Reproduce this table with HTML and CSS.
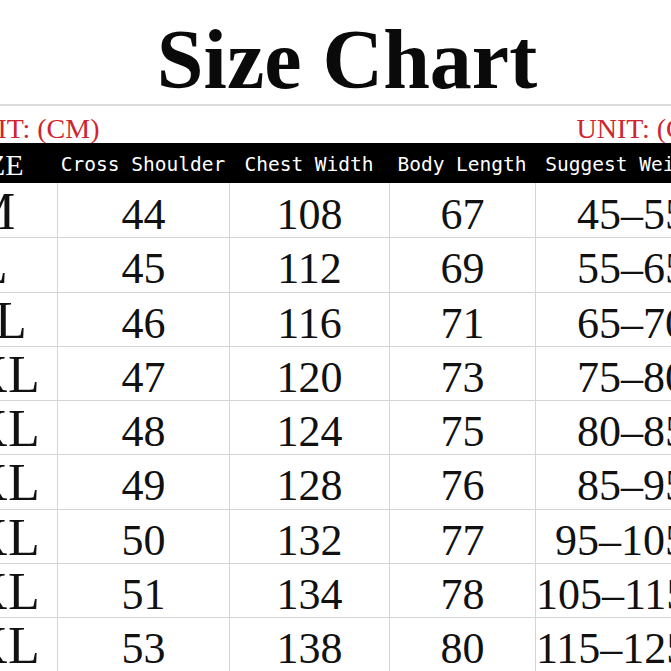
FILE: index.html
```html
<!DOCTYPE html>
<html lang="en">
<head>
<meta charset="utf-8">
<title>Size Chart</title>
<link rel="stylesheet" href="styles.css">
</head>
<body>
<div class="sheet">
  <h1 class="title">Size Chart</h1>
  <div class="unit-row">
    <span class="unit">UNIT: (CM)</span>
    <span class="unit">UNIT: (CM)</span>
  </div>
  <div class="chart">
    <div class="hd hd-size">SIZE</div>
    <div class="hd">Cross Shoulder</div>
    <div class="hd">Chest Width</div>
    <div class="hd">Body Length</div>
    <div class="hd">Suggest Weight(KG)</div>

    <div class="c size">M</div><div class="c">44</div><div class="c">108</div><div class="c">67</div><div class="c wt">45–55</div>
    <div class="c size r">L</div><div class="c r">45</div><div class="c r">112</div><div class="c r">69</div><div class="c wt r">55–65</div>
    <div class="c size r">XL</div><div class="c r">46</div><div class="c r">116</div><div class="c r">71</div><div class="c wt r">65–70</div>
    <div class="c size r">2XL</div><div class="c r">47</div><div class="c r">120</div><div class="c r">73</div><div class="c wt r">75–80</div>
    <div class="c size r">3XL</div><div class="c r">48</div><div class="c r">124</div><div class="c r">75</div><div class="c wt r">80–85</div>
    <div class="c size r">4XL</div><div class="c r">49</div><div class="c r">128</div><div class="c r">76</div><div class="c wt r">85–95</div>
    <div class="c size r">5XL</div><div class="c r">50</div><div class="c r">132</div><div class="c r">77</div><div class="c wt r">95–105</div>
    <div class="c size r">6XL</div><div class="c r">51</div><div class="c r">134</div><div class="c r">78</div><div class="c wt r">105–115</div>
    <div class="c size r">7XL</div><div class="c r">53</div><div class="c r">138</div><div class="c r">80</div><div class="c wt r">115–125</div>
  </div>
</div>
</body>
</html>
```
FILE: styles.css
```css
html, body {
  margin: 0;
  padding: 0;
  background: #ffffff;
}
body {
  width: 671px;
  height: 671px;
  overflow: hidden;
}
.sheet {
  width: 840px;
  margin-left: -73px;
}
.title {
  margin: 0;
  padding: 17px 0 2px;
  font-family: "Liberation Serif", serif;
  font-weight: bold;
  font-size: 84px;
  line-height: 85px;
  text-align: center;
  color: #0a0a0a;
  border-bottom: 2px solid #dcdcdc;
}
.unit-row {
  display: flex;
  justify-content: space-between;
  height: 37px;
  box-sizing: border-box;
  padding: 9px 48px 0 30px;
}
.unit {
  font-family: "Liberation Serif", serif;
  font-size: 28px;
  line-height: 28px;
  color: #d0252e;
}
.chart {
  display: grid;
  grid-template-columns: 130px 172px 160px 146px 232px;
  grid-template-rows: 40px repeat(9, 54.25px);
}
.hd {
  background: #000000;
  color: #ffffff;
  font-family: "DejaVu Sans Mono", monospace;
  font-size: 19.5px;
  line-height: 36px;
  padding-top: 4px;
  text-align: center;
  white-space: nowrap;
}
.hd-size {
  font-family: "Liberation Serif", serif;
  font-size: 30px;
}
.c {
  box-sizing: border-box;
  font-family: "Liberation Serif", serif;
  font-size: 44px;
  line-height: 44px;
  padding-top: 10px;
  text-align: center;
  color: #111111;
  border-left: 1px solid #d4d4d4;
  white-space: nowrap;
}
.c.r {
  border-top: 1px solid #d4d4d4;
  padding-top: 9px;
}
.c.size {
  border-left: none;
  font-size: 52px;
  padding-top: 7px;
}
.c.size.r {
  padding-top: 6px;
}
.c.wt {
  text-align: right;
  padding-right: 80px;
}
```
